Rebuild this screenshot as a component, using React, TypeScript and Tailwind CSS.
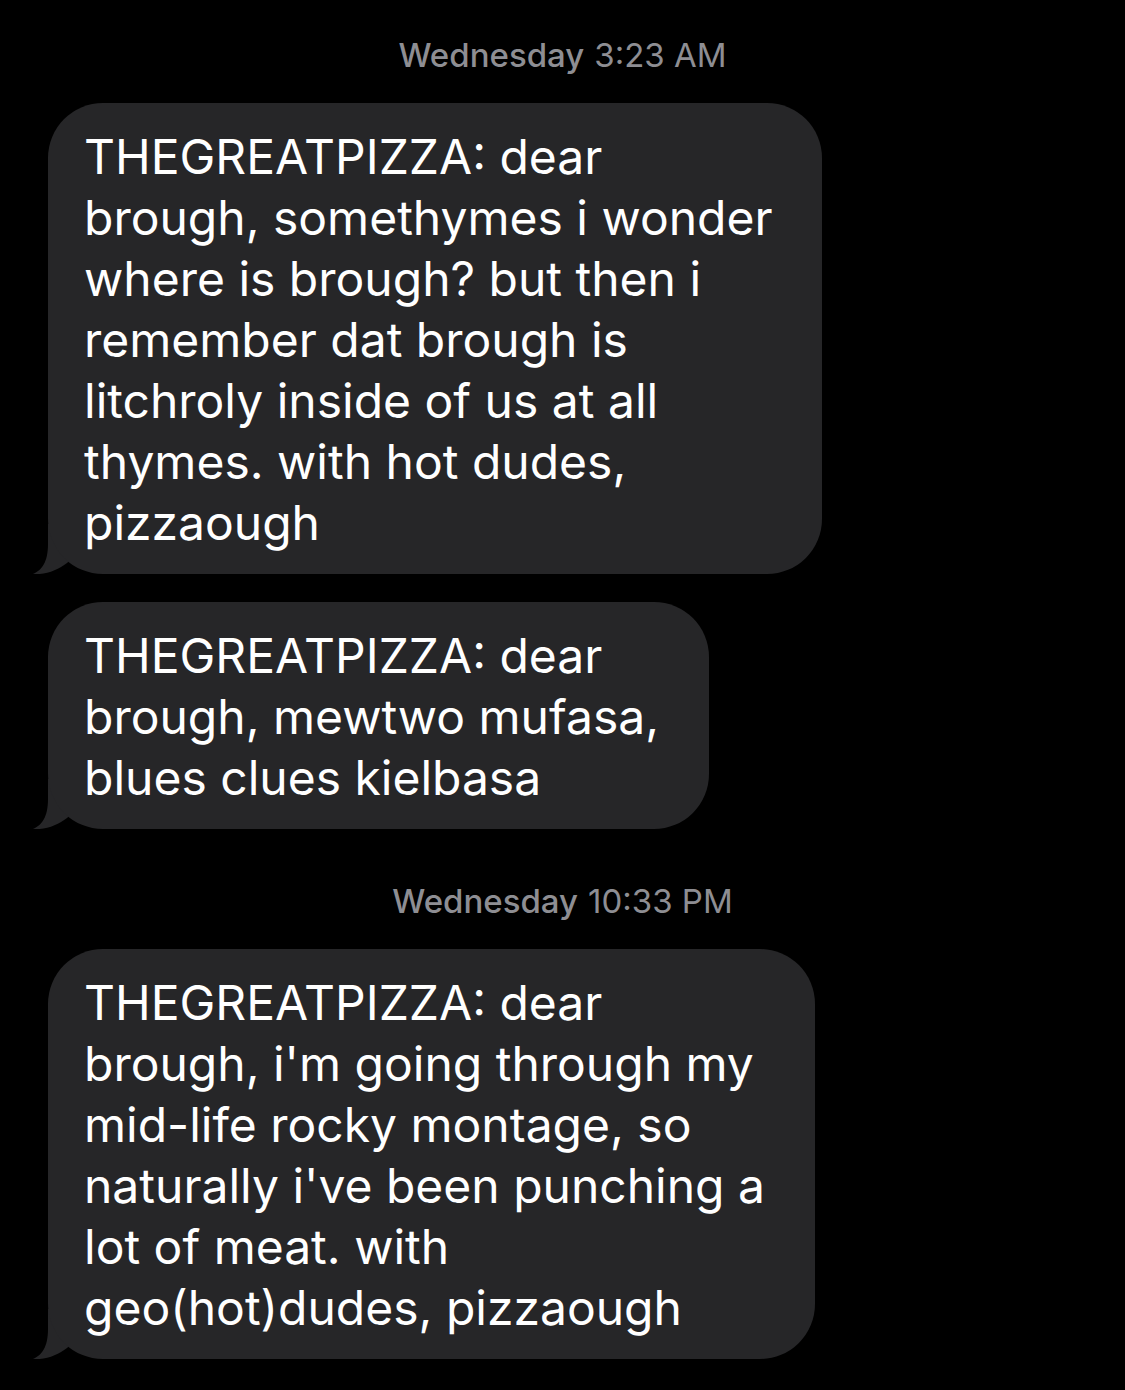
import React from 'react';

const messages: { time?: string; lines: string[] }[] = [
  {
    time: '3:23 AM',
    lines: [
      'THEGREATPIZZA: dear',
      'brough, somethymes i wonder',
      'where is brough? but then i',
      'remember dat brough is',
      'litchroly inside of us at all',
      'thymes. with hot dudes,',
      'pizzaough',
    ],
  },
  {
    lines: ['THEGREATPIZZA: dear', 'brough, mewtwo mufasa,', 'blues clues kielbasa'],
  },
  {
    time: '10:33 PM',
    lines: [
      'THEGREATPIZZA: dear',
      "brough, i'm going through my",
      'mid-life rocky montage, so',
      "naturally i've been punching a",
      'lot of meat. with',
      'geo(hot)dudes, pizzaough',
    ],
  },
];

function Tail() {
  return (
    <svg
      className="absolute left-[-16px] bottom-0"
      width="60"
      height="50"
      viewBox="0 0 60 50"
    >
      <path d="M16,0 L16,20 C16,38 10,46 1,50 C14,51 26,46 35,39 L45,30 L45,0 Z" fill="#262628" />
    </svg>
  );
}

function Bubble({ lines }: { lines: string[] }) {
  return (
    <div className="relative w-fit">
      <Tail />
      <div className="relative rounded-[55px] bg-[#262628] pl-[36px] pr-[50px] pt-[23px] pb-[21px] text-[48px] leading-[61px] text-white">
        {lines.map((l, i) => (
          <div key={i} className="whitespace-nowrap">{l}</div>
        ))}
      </div>
    </div>
  );
}

export default function App() {
  return (
    <div
      className="min-h-[1390px] w-[1125px] bg-black pl-[48px]"
      style={{ fontFamily: 'Inter, "Noto Sans", sans-serif' }}
    >
      {messages.map((m, i) => (
        <div key={i}>
          {m.time && (
            <div className={`flex justify-center pr-[48px] text-[33px] leading-[40px] text-[#8e8e93] ${i === 0 ? 'pt-[35px] pb-[28px]' : 'pt-[52px] pb-[28px]'}`}>
              <span className="font-medium">Wednesday</span>
              <span className="ml-[10px]">{m.time}</span>
            </div>
          )}
          <div className={m.time ? '' : 'mt-[28px]'}>
            <Bubble lines={m.lines} />
          </div>
        </div>
      ))}
    </div>
  );
}
